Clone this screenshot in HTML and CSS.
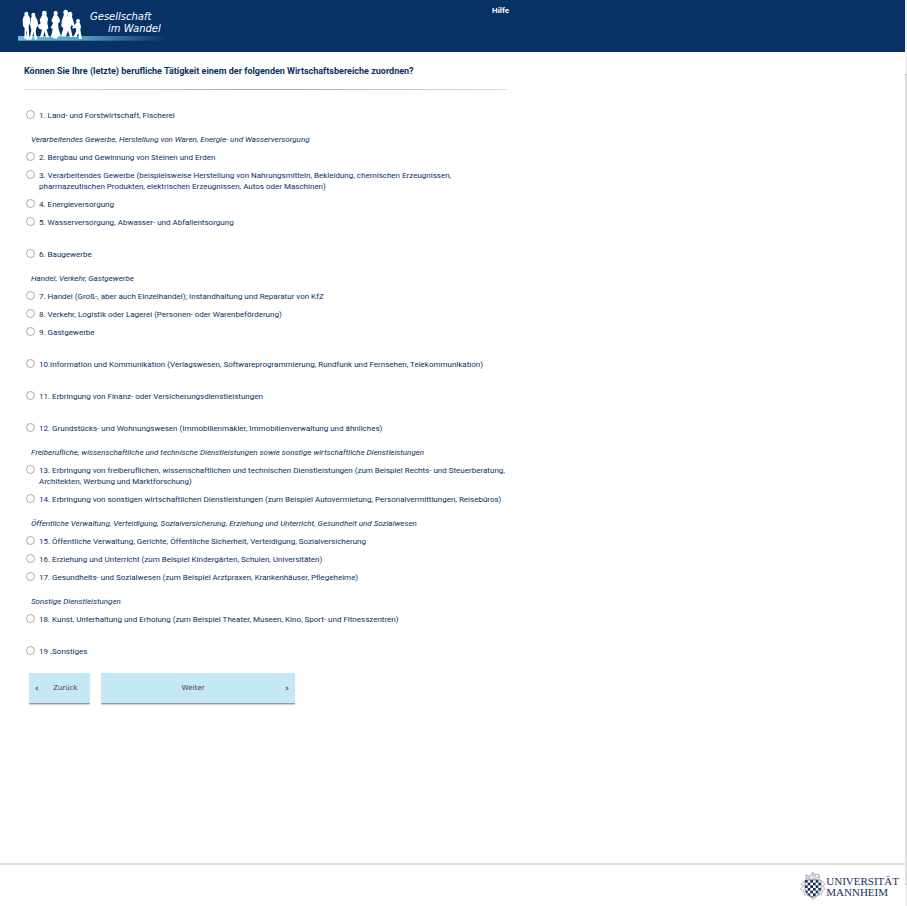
FILE: index.html
```html
<!DOCTYPE html>
<html lang="de">
<head>
<meta charset="utf-8">
<title>Gesellschaft im Wandel</title>
<link rel="stylesheet" href="styles.css">
</head>
<body>
<div class="page">
  <header class="top">
    <div class="brand">
      <svg class="people" viewBox="54 27 450 102" aria-hidden="true">
        <defs><linearGradient id="band"><stop offset="0" stop-color="#6cc0dc"/><stop offset=".4" stop-color="#5aa3c4"/><stop offset="1" stop-color="#083165"/></linearGradient></defs>
        <rect x="54" y="108" width="450" height="14" fill="url(#band)"/>
        <g fill="#fff">
          <ellipse cx="79" cy="42" rx="6" ry="7"/>
          <path d="M72 47 86 46 91 57 90 70 86 78 87 100 88 119 79 119 80 96 78 92 79 116 73 116 74 84 69 78 68 58Z"/>
          <ellipse cx="100" cy="45" rx="6" ry="7"/>
          <path d="M94 50 106 49 112 60 115 76 109 84 107 96 112 118 104 119 100 96 96 118 88 119 94 90 90 74Z"/>
          <ellipse cx="133" cy="40" rx="7" ry="8"/>
          <path d="M126 46 139 45 144 56 142 70 145 84 140 90 147 111 138 112 133 94 130 110 120 112 126 90 116 85 114 76 122 70 119 60Z"/>
          <ellipse cx="167" cy="40" rx="6" ry="8"/>
          <path d="M161 46 172 46 179 56 180 65 174 71 176 88 183 108 173 110 171 116 163 115 153 110 158 87 152 83 159 70 154 62Z"/>
          <ellipse cx="197" cy="37" rx="7" ry="8"/>
          <path d="M192 43 202 42 204 60 202 72 200 85 193 108 183 109 190 85 184 79 185 63Z"/>
          <ellipse cx="210" cy="43" rx="7" ry="8"/>
          <path d="M202 49 215 48 221 65 224 82 215 76 211 82 218 110 210 112 204 92 198 109 188 110 198 82 197 62Z"/>
          <ellipse cx="234" cy="63" rx="6" ry="6"/>
          <path d="M229 68 238 67 243 78 241 91 246 116 237 117 235 99 229 112 220 110 229 93 227 83 218 86 217 82Z"/>
        </g>
      </svg>
      <div class="name"><span>Gesellschaft</span><span class="name-end">im Wandel</span></div>
    </div>
    <a class="help" href="#">Hilfe</a>
  </header>
  <main>
    <form>
      <h1 id="question">Können Sie Ihre (letzte) berufliche Tätigkeit einem der folgenden Wirtschaftsbereiche zuordnen?</h1>
      <div class="rule"></div>
      <div class="options" role="radiogroup" aria-labelledby="question">
        <section class="single"><label><input type="radio" name="b"><span>1. Land- und Forstwirtschaft, Fischerei</span></label></section>
        <section><h2>Verarbeitendes Gewerbe, Herstellung von Waren, Energie- und Wasserversorgung</h2>
          <label><input type="radio" name="b"><span>2. Bergbau und Gewinnung von Steinen und Erden</span></label>
          <label><input type="radio" name="b"><span>3. Verarbeitendes Gewerbe (beispielsweise Herstellung von Nahrungsmitteln, Bekleidung, chemischen Erzeugnissen, pharmazeutischen Produkten, elektrischen Erzeugnissen, Autos oder Maschinen)</span></label>
          <label><input type="radio" name="b"><span>4. Energieversorgung</span></label>
          <label><input type="radio" name="b"><span>5. Wasserversorgung, Abwasser- und Abfallentsorgung</span></label></section>
        <section class="single"><label><input type="radio" name="b"><span>6. Baugewerbe</span></label></section>
        <section><h2>Handel, Verkehr, Gastgewerbe</h2>
          <label><input type="radio" name="b"><span>7. Handel (Groß-, aber auch Einzelhandel); Instandhaltung und Reparatur von KfZ</span></label>
          <label><input type="radio" name="b"><span>8. Verkehr, Logistik oder Lagerei (Personen- oder Warenbeförderung)</span></label>
          <label><input type="radio" name="b"><span>9. Gastgewerbe</span></label></section>
        <section class="single"><label><input type="radio" name="b"><span>10.Information und Kommunikation (Verlagswesen, Softwareprogrammierung, Rundfunk und Fernsehen, Telekommunikation)</span></label></section>
        <section class="single"><label><input type="radio" name="b"><span>11. Erbringung von Finanz- oder Versicherungsdienstleistungen</span></label></section>
        <section class="single"><label><input type="radio" name="b"><span>12. Grundstücks- und Wohnungswesen (Immobilienmakler, Immobilienverwaltung und ähnliches)</span></label></section>
        <section><h2>Freiberufliche, wissenschaftliche und technische Dienstleistungen sowie sonstige wirtschaftliche Dienstleistungen</h2>
          <label><input type="radio" name="b"><span>13. Erbringung von freiberuflichen, wissenschaftlichen und technischen Dienstleistungen (zum Beispiel Rechts- und Steuerberatung, Architekten, Werbung und Marktforschung)</span></label>
          <label><input type="radio" name="b"><span>14. Erbringung von sonstigen wirtschaftlichen Dienstleistungen (zum Beispiel Autovermietung, Personalvermittlungen, Reisebüros)</span></label></section>
        <section><h2>Öffentliche Verwaltung, Verteidigung, Sozialversicherung, Erziehung und Unterricht, Gesundheit und Sozialwesen</h2>
          <label><input type="radio" name="b"><span>15. Öffentliche Verwaltung, Gerichte, Öffentliche Sicherheit, Verteidigung, Sozialversicherung</span></label>
          <label><input type="radio" name="b"><span>16. Erziehung und Unterricht (zum Beispiel Kindergärten, Schulen, Universitäten)</span></label>
          <label><input type="radio" name="b"><span>17. Gesundheits- und Sozialwesen (zum Beispiel Arztpraxen, Krankenhäuser, Pflegeheime)</span></label></section>
        <section><h2>Sonstige Dienstleistungen</h2>
          <label><input type="radio" name="b"><span>18. Kunst, Unterhaltung und Erholung (zum Beispiel Theater, Museen, Kino, Sport- und Fitnesszentren)</span></label></section>
        <section class="single"><label><input type="radio" name="b"><span>19 .Sonstiges</span></label></section>
      </div>
      <div class="actions">
        <button type="button" class="back"><span class="arrow">‹</span><span class="caption">Zurück</span></button>
        <button type="button" class="next"><span class="caption">Weiter</span><span class="arrow">›</span></button>
      </div>
    </form>
  </main>
  <footer>
    <div class="uni">
      <svg class="crest" viewBox="0 0 78 84" aria-hidden="true">
        <defs><pattern id="checks" x="15" y="24" width="16" height="16" patternUnits="userSpaceOnUse"><path d="M0 0h8v8H0zM8 8h8v8H8z" fill="#1c2d5c"/></pattern></defs>
        <path d="M15 24h48v26q0 18-24 26-24-8-24-26z" fill="url(#checks)" stroke="#5a688e" stroke-width="2"/>
        <g fill="none" stroke="#7f8ba8" stroke-width="2">
          <path d="M19 22V8M15 11h10v8h-8M30 21V9h9v12M39 9V1M34 4h10M45 21V7h12v9h-9M58 22V12M24 22h30"/>
          <path d="M12 27 3 37l8 5-9 8 9 6 2 12 12 2 7 7 7 5 7-5 7-7 12-2 2-12 9-6-9-8 8-5-9-10"/>
        </g>
      </svg>
      <div class="uni-name">UNIVERSITÄT<br>MANNHEIM</div>
    </div>
  </footer>
</div>
<div class="scroll" aria-hidden="true"><div class="thumb"></div></div>
</body>
</html>
```
FILE: styles.css
```css
* { box-sizing: border-box; }
body { margin: 0; display: flex; min-height: 100vh; background: #fff; color: #083165; font: 8px/11px Roboto, sans-serif; }
.page { flex: 1; display: flex; flex-direction: column; min-width: 0; }
.top { display: grid; grid-template-columns: 474px 1fr; background: #083165; color: #fff; padding-left: 18px; height: 52px; }
.brand { padding-top: 9px; position: relative; }
.people { display: block; width: 150px; height: 34px; }
.name { position: absolute; left: 72px; top: 11px; font: italic 10px/12px "DejaVu Sans", sans-serif; white-space: nowrap; }
.name span { display: block; }
.name .name-end { padding-left: 18px; }
.help { color: #fff; font-weight: bold; text-decoration: none; padding-top: 5px; }
main { flex: 1; width: 56%; padding: 13px 0 0 24px; }
h1 { margin: 0; font-size: 9px; line-height: 12px; font-weight: 700; white-space: nowrap; }
.rule { height: 1px; margin: 12px 0 16px; background: linear-gradient(90deg, #ddd, #aaa 50%, #ddd); }
h2 { margin: 0; padding: 4px 0 3px 7px; font-size: 8px; line-height: 11px; font-weight: 400; font-style: italic; }
section { padding-top: 6px; }
.single { padding-top: 14px; }
.options > section:first-child { padding-top: 0; }
label { display: flex; gap: 4px; padding: 4px 0 3px 2px; }
input { appearance: none; flex: none; width: 9px; height: 9px; margin: 0; border: 1px solid #aaa; border-radius: 50%; background: #fff; }
input:checked { background: #083165; }
.actions { display: flex; gap: 11px; padding: 13px 0 0 5px; }
button { display: flex; align-items: center; height: 31px; border: 0; border-bottom: 1px solid #999; border-radius: 1px; background: #c5e8f5; box-shadow: 0 1px 1px #ccc; color: #444; font: 7px/11px "DejaVu Sans", sans-serif; padding: 1px 6px 0; }
.arrow { font-size: 9px; font-weight: bold; }
.caption { flex: 1; text-align: center; }
.back { width: 61px; }
.back .caption { padding-left: 8px; }
.next { width: 194px; }
.next .caption { padding-right: 6px; }
footer { border-top: 2px solid #ddd; padding: 7px 6px 6px 0; display: flex; justify-content: flex-end; }
.uni { display: flex; align-items: center; }
.crest { width: 26px; height: 28px; }
.uni-name { color: #1c2d5c; font: 11px/11px "Liberation Serif", serif; padding-top: 2px; }
.scroll { width: 2px; background: #f1f1f1; padding: 74px 0 21px; display: flex; }
.thumb { flex: 1; background: #e1e1e1; border-top: 1px solid #ccc; border-bottom: 1px solid #ccc; }
```
